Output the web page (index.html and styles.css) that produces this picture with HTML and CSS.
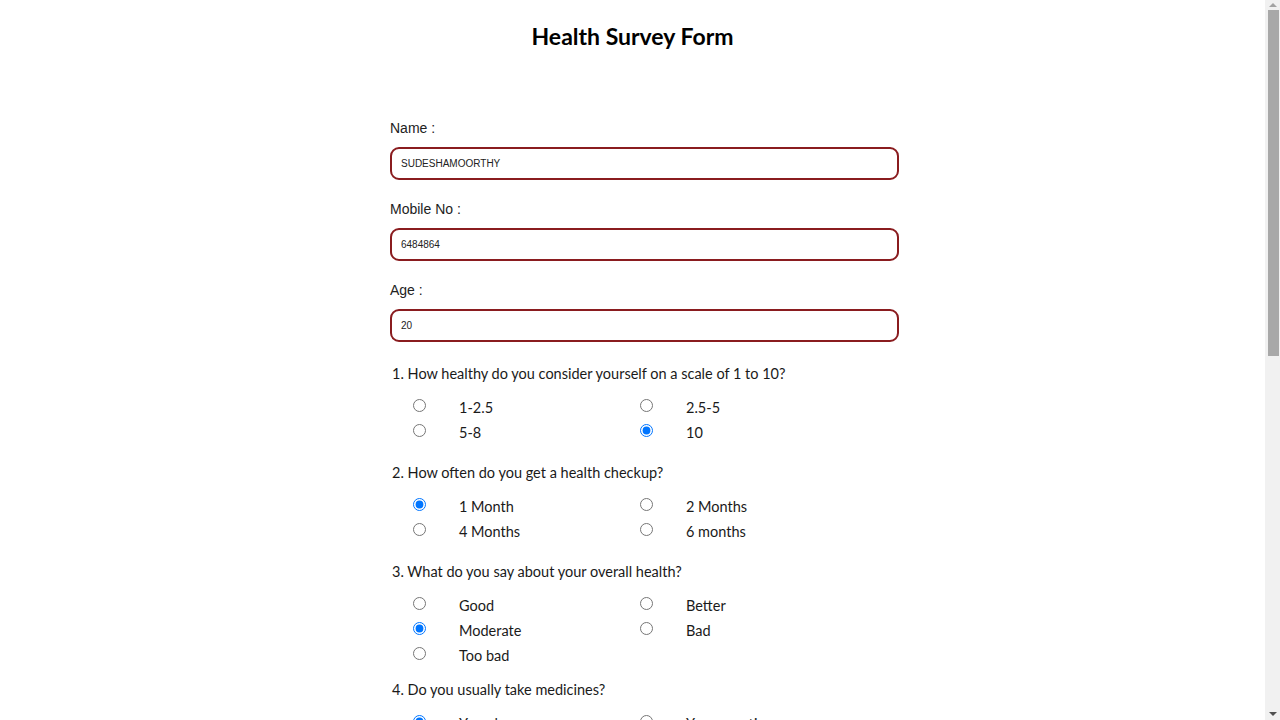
FILE: index.html
```html
<!DOCTYPE html>
<html lang="en">
<head>
<meta charset="utf-8">
<title>Health Survey Form</title>
<link rel="stylesheet" href="styles.css">
</head>
<body>
<h1 class="title">Health Survey Form</h1>
<form class="survey">
  <div class="field">
    <label class="field-label" for="name">Name :</label>
    <input class="text-input" id="name" type="text" value="SUDESHAMOORTHY">
  </div>
  <div class="field">
    <label class="field-label" for="mobile">Mobile No :</label>
    <input class="text-input" id="mobile" type="text" value="6484864">
  </div>
  <div class="field">
    <label class="field-label" for="age">Age :</label>
    <input class="text-input" id="age" type="text" value="20">
  </div>

  <div class="questions">
    <div class="question">
      <p class="q-title">1. How healthy do you consider yourself on a scale of 1 to 10?</p>
      <div class="options">
        <label class="option"><input type="radio" name="q1"><span>1-2.5</span></label>
        <label class="option"><input type="radio" name="q1"><span>2.5-5</span></label>
        <label class="option"><input type="radio" name="q1"><span>5-8</span></label>
        <label class="option"><input type="radio" name="q1" checked><span>10</span></label>
      </div>
    </div>

    <div class="question">
      <p class="q-title">2. How often do you get a health checkup?</p>
      <div class="options">
        <label class="option"><input type="radio" name="q2" checked><span>1 Month</span></label>
        <label class="option"><input type="radio" name="q2"><span>2 Months</span></label>
        <label class="option"><input type="radio" name="q2"><span>4 Months</span></label>
        <label class="option"><input type="radio" name="q2"><span>6 months</span></label>
      </div>
    </div>

    <div class="question question-tight">
      <p class="q-title">3. What do you say about your overall health?</p>
      <div class="options">
        <label class="option"><input type="radio" name="q3"><span>Good</span></label>
        <label class="option"><input type="radio" name="q3"><span>Better</span></label>
        <label class="option"><input type="radio" name="q3" checked><span>Moderate</span></label>
        <label class="option"><input type="radio" name="q3"><span>Bad</span></label>
        <label class="option"><input type="radio" name="q3"><span>Too bad</span></label>
      </div>
    </div>

    <div class="question">
      <p class="q-title">4. Do you usually take medicines?</p>
      <div class="options">
        <label class="option"><input type="radio" name="q4" checked><span>Yes, always</span></label>
        <label class="option"><input type="radio" name="q4"><span>Yes, sometimes</span></label>
        <label class="option"><input type="radio" name="q4"><span>No</span></label>
        <label class="option"><input type="radio" name="q4"><span>Rarely</span></label>
      </div>
    </div>

    <div class="question">
      <p class="q-title">5. Do you exercise regularly?</p>
      <div class="options">
        <label class="option"><input type="radio" name="q5"><span>Yes</span></label>
        <label class="option"><input type="radio" name="q5"><span>No</span></label>
      </div>
    </div>
  </div>
</form>

<div class="scrollbar" aria-hidden="true">
  <span class="sb-arrow sb-up"></span>
  <div class="sb-track"><div class="sb-thumb"></div></div>
  <span class="sb-arrow sb-down"></span>
</div>
</body>
</html>
```

FILE: styles.css
```css
html, body {
  margin: 0;
  padding: 0;
  background: #ffffff;
}

html {
  overflow: hidden;
}

body {
  font-family: "Lato", "Open Sans", sans-serif;
  color: #111111;
  padding-right: 15px;
}

.title {
  margin: 0;
  padding-top: 21px;
  height: 30px;
  line-height: 30px;
  font-size: 23px;
  font-weight: 700;
  text-align: center;
  color: #000000;
}

.survey {
  width: 510px;
  margin: 67px 0 0 390px;
  padding-bottom: 60px;
}

.field {
  display: flex;
  flex-direction: column;
  margin-bottom: 19px;
}

.field-label {
  font-family: "Liberation Sans", Arial, sans-serif;
  font-size: 14px;
  line-height: 20px;
  height: 20px;
  margin-bottom: 9px;
  color: #222222;
}

.text-input {
  box-sizing: border-box;
  width: 509px;
  height: 33px;
  border: 2px solid #8a1c1f;
  border-radius: 9px;
  padding: 0 9px;
  font-family: "Liberation Sans", Arial, sans-serif;
  font-size: 10px;
  color: #222222;
  background: #ffffff;
  outline: none;
}

.questions {
  margin-top: 21px;
}

.question {
  margin-bottom: 19px;
}

.question-tight {
  margin-bottom: 13px;
}

.q-title {
  margin: 0 0 8px 2px;
  font-size: 14.5px;
  line-height: 22px;
  height: 22px;
  color: #1a1a1a;
}

.options {
  display: grid;
  grid-template-columns: 227px 227px;
  grid-auto-rows: 25px;
  padding-left: 23px;
}

.option {
  display: flex;
  align-items: center;
  font-size: 14.5px;
  color: #1a1a1a;
}

.option input {
  width: 13px;
  height: 13px;
  margin: 0 33px 0 0;
}

.option span {
  line-height: 25px;
  padding-top: 3px;
}

/* simulated browser scrollbar */
.scrollbar {
  position: fixed;
  top: 0;
  right: 0;
  width: 15px;
  height: 100%;
  background: #f1f1f1;
  display: flex;
  flex-direction: column;
  align-items: center;
}

.sb-arrow {
  width: 0;
  height: 0;
  border-left: 4px solid transparent;
  border-right: 4px solid transparent;
}

.sb-up {
  margin-top: 3px;
  margin-bottom: 3px;
  border-bottom: 4px solid #a3a3a3;
}

.sb-down {
  margin-top: 3px;
  margin-bottom: 4px;
  border-top: 4px solid #505050;
}

.sb-track {
  flex: 1;
  width: 100%;
  display: flex;
  justify-content: center;
}

.sb-thumb {
  width: 11px;
  height: 346px;
  margin-left: 1px;
  background: #a8a8a8;
}
```
